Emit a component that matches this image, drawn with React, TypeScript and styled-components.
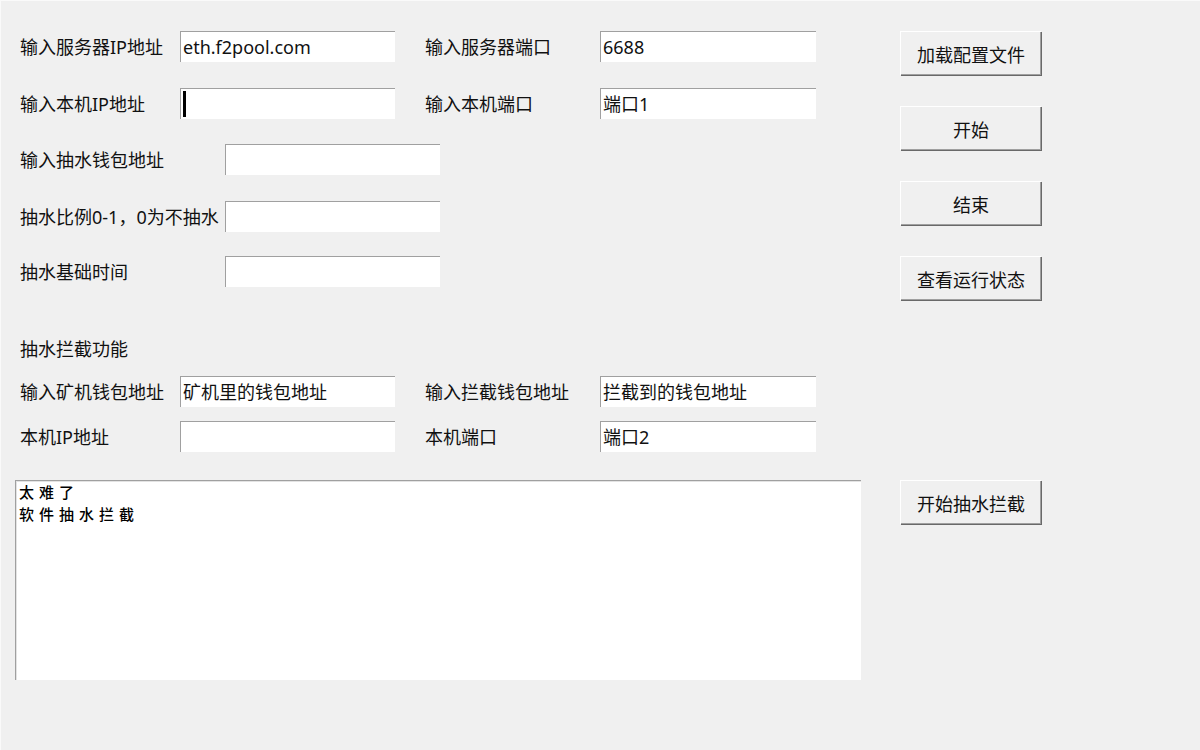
import styled, { createGlobalStyle } from "styled-components";

const GlobalStyle = createGlobalStyle`
  html, body {
    margin: 0;
    padding: 0;
    background: #f0f0f0;
  }
  body {
    font-family: "Noto Sans", "Noto Sans CJK SC", sans-serif;
    color: #111;
  }
`;

const Window = styled.div`
  box-sizing: border-box;
  width: 1200px;
  height: 750px;
  padding-top: 30px;
  background: #f0f0f0;
  border-top: 1px solid #fafafa;
  border-left: 1px solid #fafafa;
  overflow: hidden;
`;

const Top = styled.div`
  display: flex;
`;

const Form = styled.div`
  width: 899px;
  display: flex;
  flex-direction: column;
`;

const Row = styled.div<{ wide?: boolean; gap?: number }>`
  display: grid;
  grid-template-columns: ${(p) => (p.wide ? "205px 215px" : "160px 215px 30px 175px 216px")};
  align-items: center;
  padding-left: 19px;
  margin-top: ${(p) => p.gap ?? 0}px;
  height: 31px;
`;

const Label = styled.span`
  font-size: 18px;
  line-height: 22px;
  white-space: nowrap;
`;

const SectionTitle = styled.div`
  padding-left: 19px;
  margin-top: 52px;
  margin-bottom: 17px;
  font-size: 18px;
  line-height: 20px;
  height: 20px;
`;

const Field = styled.div`
  box-sizing: border-box;
  height: 31px;
  background: #fff;
  border-top: 1px solid #a0a0a0;
  border-left: 1px solid #a0a0a0;
  padding-left: 2px;
  font-size: 18px;
  line-height: 29px;
  display: flex;
  align-items: center;
  white-space: nowrap;
`;

const Caret = styled.span`
  display: inline-block;
  width: 3px;
  height: 26px;
  background: #000;
`;

const Buttons = styled.div`
  display: flex;
  flex-direction: column;
  gap: 31px;
`;

const Button = styled.button`
  box-sizing: border-box;
  width: 141px;
  height: 44px;
  padding: 0;
  background: #f0f0f0;
  border: none;
  border-top: 1px solid #fff;
  border-left: 1px solid #fff;
  box-shadow: inset -1px -1px 0 #a0a0a0, 1px 1px 0 #696969;
  font-family: "Noto Sans", "Noto Sans CJK SC", sans-serif;
  font-size: 18px;
  color: #111;
`;

const Bottom = styled.div`
  display: flex;
  margin-top: 28px;
  padding-left: 14px;
  gap: 39px;
  align-items: flex-start;
`;

const Log = styled.div`
  box-sizing: border-box;
  width: 846px;
  height: 200px;
  background: #fff;
  border-top: 1px solid #a0a0a0;
  border-left: 1px solid #a0a0a0;
  box-shadow: inset 1px 1px 0 #e3e3e3;
  padding: 0 3px;
  font-family: "Noto Sans CJK SC", sans-serif;
  font-size: 15px;
  font-weight: 500;
  line-height: 22px;
  letter-spacing: 5px;
  color: #000;
`;

export default function App() {
  return (
    <>
      <GlobalStyle />
      <Window>
        <Top>
          <Form>
            <Row>
              <Label>输入服务器IP地址</Label>
              <Field>eth.f2pool.com</Field>
              <span />
              <Label>输入服务器端口</Label>
              <Field>6688</Field>
            </Row>
            <Row gap={26}>
              <Label>输入本机IP地址</Label>
              <Field>
                <Caret />
              </Field>
              <span />
              <Label>输入本机端口</Label>
              <Field>端口1</Field>
            </Row>
            <Row wide gap={25}>
              <Label>输入抽水钱包地址</Label>
              <Field />
            </Row>
            <Row wide gap={26}>
              <Label>抽水比例0-1，0为不抽水</Label>
              <Field />
            </Row>
            <Row wide gap={24}>
              <Label>抽水基础时间</Label>
              <Field />
            </Row>
            <SectionTitle>抽水拦截功能</SectionTitle>
            <Row>
              <Label>输入矿机钱包地址</Label>
              <Field>矿机里的钱包地址</Field>
              <span />
              <Label>输入拦截钱包地址</Label>
              <Field>拦截到的钱包地址</Field>
            </Row>
            <Row gap={14}>
              <Label>本机IP地址</Label>
              <Field />
              <span />
              <Label>本机端口</Label>
              <Field>端口2</Field>
            </Row>
          </Form>
          <Buttons>
            <Button>加载配置文件</Button>
            <Button>开始</Button>
            <Button>结束</Button>
            <Button>查看运行状态</Button>
          </Buttons>
        </Top>
        <Bottom>
          <Log>
            太难了
            <br />
            软件抽水拦截
          </Log>
          <Button>开始抽水拦截</Button>
        </Bottom>
      </Window>
    </>
  );
}
